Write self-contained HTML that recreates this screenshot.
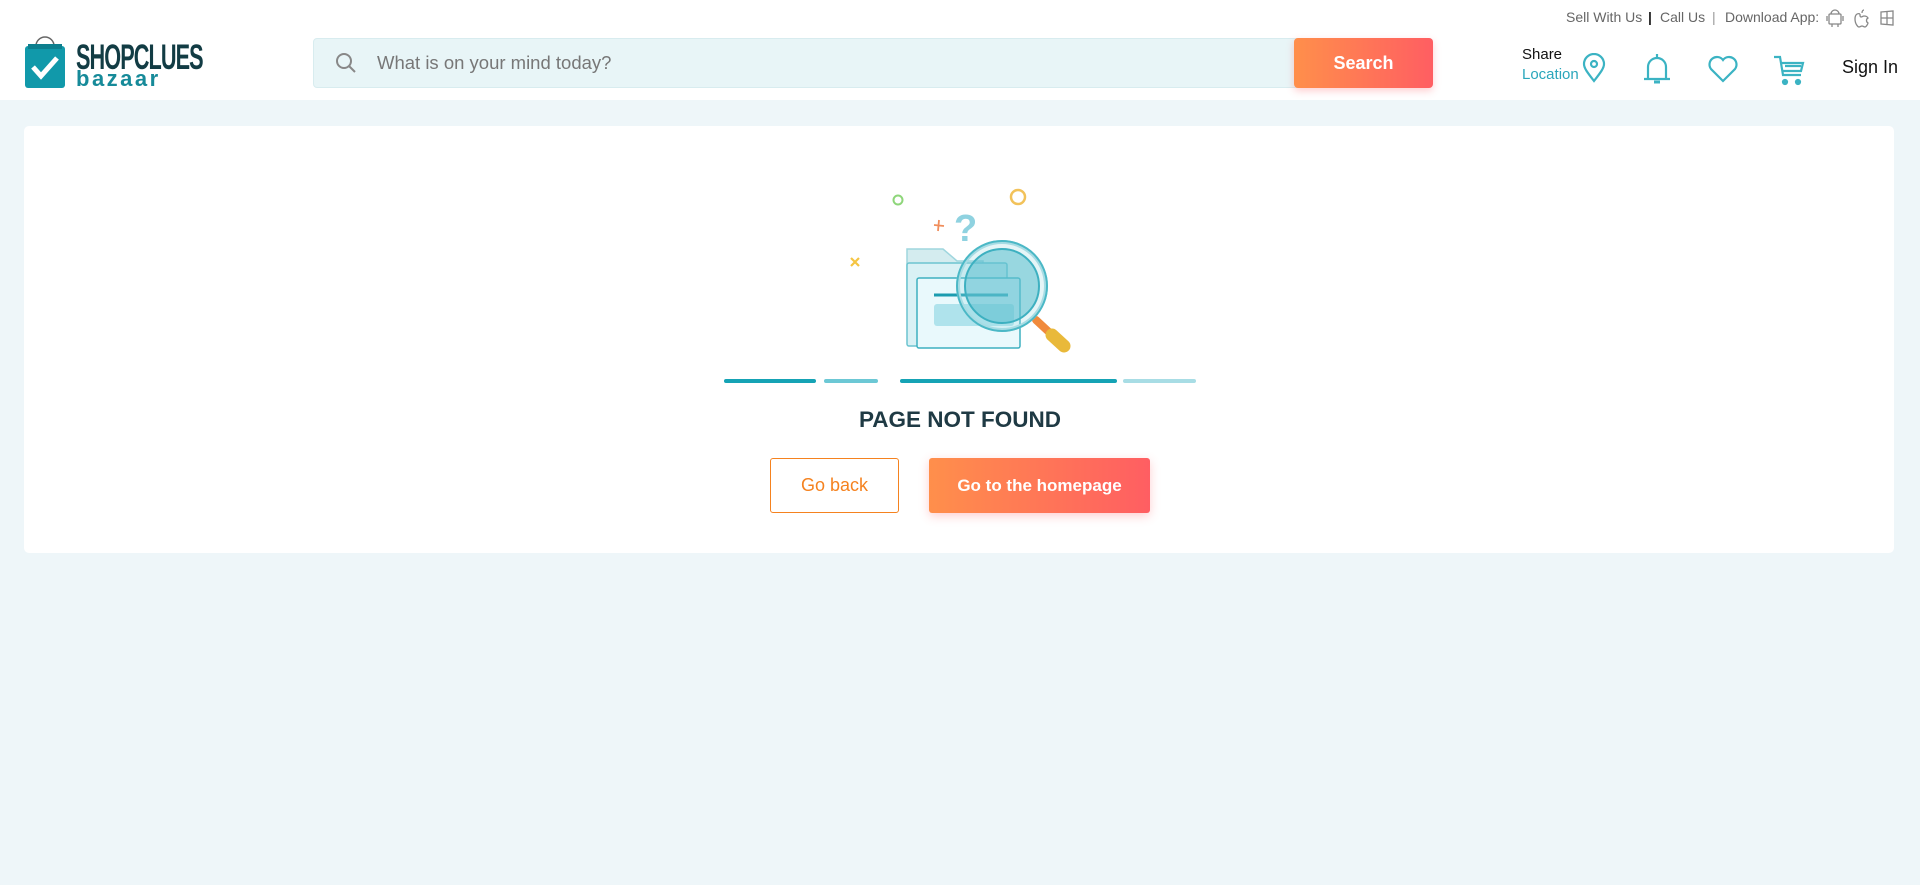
<!DOCTYPE html>
<html><head><meta charset="utf-8">
<style>
*{margin:0;padding:0;box-sizing:border-box}
body{width:1920px;height:885px;background:#eef6f9;font-family:"Liberation Sans",Arial,sans-serif;position:relative;overflow:hidden}
.hdr{position:absolute;left:0;top:0;width:1920px;height:100px;background:#fff}
.abs{position:absolute}
.top{top:9px;font-size:14px;color:#666;white-space:nowrap}
.search{left:313px;top:38px;width:1120px;height:50px;background:#e8f5f7;border:1px solid #d8ecef;border-radius:4px}
.sbtn{left:1294px;top:38px;width:139px;height:50px;border-radius:4px;background:linear-gradient(90deg,#ff8f4b,#ff5e62);color:#fff;font-weight:bold;font-size:18px;display:flex;align-items:center;justify-content:center;box-shadow:0 3px 8px rgba(255,94,98,.3)}
.card{left:24px;top:126px;width:1870px;height:427px;background:#fff;border-radius:5px}
.btn{top:458px;height:55px;display:flex;align-items:center;justify-content:center;font-size:18px;border-radius:3px}
</style></head><body>
<div class="hdr"></div>
<div class="abs top" style="left:1566px">Sell With Us</div>
<div class="abs top" style="left:1648px;color:#222;font-weight:bold">|</div>
<div class="abs top" style="left:1660px">Call Us</div>
<div class="abs top" style="left:1712px;color:#999">|</div>
<div class="abs top" style="left:1725px">Download App:</div>
<svg class="abs" style="left:1826px;top:8px" width="90" height="20" viewBox="0 0 90 20" fill="none" stroke="#888" stroke-width="1.3">
<rect x="3" y="6" width="12" height="10" rx="1"/><path d="M5 6a4 4 0 0 1 8 0M1 8v5M17 8v5M6 16v3M12 16v3"/>
<path d="M34 6c-2-1-5 0-5 5s3 8 4 8 2-1 3-1 2 1 3 1c1 0 3-3 3-4-2-1-2-4 0-5-1-2-3-2-4-2s-2 1-3 1-1-1-1-3M36 5c0-2 1-3 2-3"/>
<path d="M55 4l12-1v14l-12-1zM55 10h12M61 3v14"/>
</svg>
<!-- logo -->
<svg class="abs" style="left:24px;top:34px" width="42" height="56" viewBox="0 0 42 56">
<path d="M12 12a9 9 0 0 1 18 0" fill="none" stroke="#666" stroke-width="1.5"/>
<rect x="1" y="12" width="40" height="42" rx="3" fill="#1199aa"/>
<rect x="4" y="10" width="34" height="5" fill="#0d7f8e"/>
<path d="M9 33l8 9 16-18" fill="none" stroke="#fff" stroke-width="5"/>
</svg>
<div class="abs" style="left:76px;top:38px;font-size:35px;font-weight:bold;color:#123c44;letter-spacing:-1.5px;transform:scaleX(.62);transform-origin:left;white-space:nowrap">SHOPCLUES</div>
<div class="abs" style="left:76px;top:66px;font-size:22px;font-weight:bold;color:#168a99;letter-spacing:2.5px">bazaar</div>
<div class="abs search"></div>
<svg class="abs" style="left:334px;top:51px" width="24" height="24" viewBox="0 0 24 24" fill="none" stroke="#888" stroke-width="2"><circle cx="10" cy="10" r="7"/><path d="M15 15l6 6"/></svg>
<div class="abs" style="left:377px;top:52px;font-size:18.5px;color:#777">What is on your mind today?</div>
<div class="abs sbtn">Search</div>
<div class="abs" style="left:1522px;top:46px;font-size:15px;color:#111">Share</div>
<div class="abs" style="left:1522px;top:66px;font-size:15px;color:#2aa6bb">Location</div>
<svg class="abs" style="left:1581px;top:53px" width="26" height="30" viewBox="0 0 26 30" fill="none" stroke="#3bb3c3" stroke-width="2.2"><path d="M13 28C6 19 3 15 3 11a10 10 0 0 1 20 0c0 4-3 8-10 17z"/><circle cx="13" cy="11" r="3"/></svg>
<svg class="abs" style="left:1641px;top:51px" width="32" height="36" viewBox="0 0 32 36" fill="none" stroke="#3bb3c3" stroke-width="2.2"><path d="M16 3v3M7 28V16a9 9 0 0 1 18 0v12M3 28h26"/><path d="M13 31h6" stroke-width="3"/></svg>
<svg class="abs" style="left:1707px;top:54px" width="32" height="30" viewBox="0 0 32 30" fill="none" stroke="#3bb3c3" stroke-width="2.2"><path d="M16 27L4 15a7 7 0 0 1 12-9 7 7 0 0 1 12 9z"/></svg>
<svg class="abs" style="left:1772px;top:53px" width="34" height="34" viewBox="0 0 34 34" fill="none" stroke="#3bb3c3" stroke-width="2.2"><path d="M2 4h6l3 18h18M9 10h22l-2 8H10M13 13h16"/><circle cx="13" cy="29" r="2" fill="#3bb3c3"/><circle cx="26" cy="29" r="2" fill="#3bb3c3"/></svg>
<div class="abs" style="left:1842px;top:57px;font-size:18px;color:#111">Sign In</div>
<div class="abs card"></div>
<svg class="abs" style="left:840px;top:185px" width="240" height="200" viewBox="0 0 240 200">
<circle cx="58" cy="15" r="4.5" fill="none" stroke="#8ed67a" stroke-width="2"/>
<circle cx="178" cy="12" r="7" fill="none" stroke="#f2c25a" stroke-width="2.5"/>
<path d="M11 73l8 8M19 73l-8 8" stroke="#f5c542" stroke-width="2.2"/>
<path d="M94 40l10 1M99 35l-1 11" stroke="#f08e5c" stroke-width="1.8"/>
<text x="114" y="56" font-size="38" font-weight="bold" fill="#8fd2e0" font-family="Liberation Sans">?</text>
<path d="M67 64h36l14 12h26v28H67z" fill="#d4ecef" stroke="#9fd6de" stroke-width="1.5"/>
<rect x="67" y="78" width="100" height="83" rx="2" fill="#d9f1f5" stroke="#6cc4d0" stroke-width="1.5"/>
<rect x="77" y="93" width="103" height="70" rx="2" fill="#e9f9fc" stroke="#3db0c0" stroke-width="1.5"/>
<rect x="94" y="119" width="80" height="22" rx="3" fill="#afe3ec"/>
<line x1="94" y1="110" x2="168" y2="110" stroke="#1b9caf" stroke-width="3"/>
<path d="M196 135l14 13" stroke="#f08a3c" stroke-width="8" stroke-linecap="round"/>
<path d="M212 150l12 11" stroke="#e9b93a" stroke-width="13" stroke-linecap="round"/>
<circle cx="162" cy="101" r="44" fill="rgba(150,215,225,.25)" stroke="#a7dce4" stroke-width="4"/>
<circle cx="162" cy="101" r="37" fill="rgba(90,190,205,.55)" stroke="#3db0c0" stroke-width="2"/>
<circle cx="162" cy="101" r="45" fill="none" stroke="#4bb8c6" stroke-width="2"/>
</svg>
<div class="abs" style="left:724px;top:379px;width:92px;height:4px;background:#15a3b5;border-radius:2px"></div>
<div class="abs" style="left:824px;top:379px;width:54px;height:4px;background:#6cc8d5;border-radius:2px"></div>
<div class="abs" style="left:900px;top:379px;width:217px;height:4px;background:#15a3b5;border-radius:2px"></div>
<div class="abs" style="left:1123px;top:379px;width:73px;height:4px;background:#a8dde5;border-radius:2px"></div>
<div class="abs" style="left:760px;top:407px;width:400px;text-align:center;font-size:22.5px;font-weight:bold;color:#1f3a44">PAGE NOT FOUND</div>
<div class="abs btn" style="left:770px;width:129px;border:1.5px solid #f5821f;color:#f5821f;background:#fff">Go back</div>
<div class="abs btn" style="left:929px;width:221px;background:linear-gradient(90deg,#ff8f4b,#ff5e62);color:#fff;font-weight:bold;font-size:17px;box-shadow:0 3px 10px rgba(255,94,98,.3)">Go to the homepage</div>
</body></html>
